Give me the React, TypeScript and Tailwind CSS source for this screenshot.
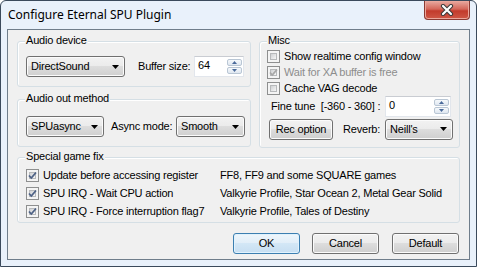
import React from 'react';

const btnFace =
  'bg-[linear-gradient(to_bottom,#f2f2f2,#ebebeb_49%,#dddddd_50%,#cfcfcf)] shadow-[inset_0_0_0_1px_#fbfbfb]';

function Arrow() {
  return (
    <svg width="7" height="4" viewBox="0 0 7 4">
      <path d="M0 0H7L3.5 4Z" fill="#000" />
    </svg>
  );
}

function Combo({ label, className }: { label: string; className: string }) {
  return (
    <div
      className={`flex h-[21px] items-center justify-between rounded-[3px] border border-[#707070] pl-[4px] pr-[5px] ${btnFace} ${className}`}
    >
      <span>{label}</span>
      <Arrow />
    </div>
  );
}

function SpinBtn({ up }: { up?: boolean }) {
  return (
    <div className="flex flex-1 items-center justify-center rounded-[2px] border border-[#b9c6d4] bg-[linear-gradient(to_bottom,#f6f9fc,#dfe7f0)]">
      <svg width="5" height="3" viewBox="0 0 5 3">
        <path d={up ? 'M0 3H5L2.5 0Z' : 'M0 0H5L2.5 3Z'} fill="#4a6a9a" />
      </svg>
    </div>
  );
}

function SpinEdit({ value, className }: { value: string; className: string }) {
  return (
    <div
      className={`flex h-[21px] items-stretch border border-[#e2e6ec] border-t-[#c9ccd2] bg-white ${className}`}
    >
      <span className="flex-1 pl-[3px] leading-[17px]">{value}</span>
      <div className="flex w-[16px] flex-col gap-[1px] py-[2px] pr-[1px]">
        <SpinBtn up />
        <SpinBtn />
      </div>
    </div>
  );
}

function Check({ checked, disabled }: { checked?: boolean; disabled?: boolean }) {
  return (
    <div className="relative h-[13px] w-[13px] shrink-0 border border-[#8e8f8f] bg-[#f4f4f4] p-[2px]">
      <div className="h-full w-full border border-[#b7b9bb] bg-[linear-gradient(135deg,#cfd1d3,#f6f6f6)]" />
      {checked && (
        <svg className="absolute left-0 top-0" width="11" height="11" viewBox="0 0 11 11">
          <path
            d="M2 5.5L4.3 8L9 2.5"
            fill="none"
            stroke={disabled ? '#a7a7a7' : '#4d6185'}
            strokeWidth="1.8"
          />
        </svg>
      )}
    </div>
  );
}

function Group({ title, className, children }: { title: string; className: string; children?: React.ReactNode }) {
  return (
    <div
      className={`relative rounded-[3px] border border-[#d5dfe5] shadow-[inset_1px_1px_0_#fff] ${className}`}
    >
      <span className="absolute -top-[8px] left-[7px] bg-[#f0f0f0] px-[1px] leading-[13px]">{title}</span>
      {children}
    </div>
  );
}

function Button({ label, isDefault, className }: { label: string; isDefault?: boolean; className: string }) {
  return (
    <div
      className={`flex h-[21px] items-center justify-center rounded-[3px] border ${
        isDefault
          ? 'border-[#3c7fb1] bg-[linear-gradient(to_bottom,#eef6fc,#e1eef8_49%,#d3e7f6_50%,#c6def2)] shadow-[inset_0_0_0_1px_#e0f2fd]'
          : `border-[#707070] ${btnFace}`
      } ${className}`}
    >
      {label}
    </div>
  );
}

const fixes = [
  ['Update before accessing register', 'FF8, FF9 and some SQUARE games'],
  ['SPU IRQ - Wait CPU action', 'Valkyrie Profile, Star Ocean 2, Metal Gear Solid'],
  ['SPU IRQ - Force interruption flag7', 'Valkyrie Profile, Tales of Destiny'],
];

export default function App() {
  return (
    <div className="flex h-[267px] w-[477px] flex-col rounded-t-[6px] border border-[#3b4a5c] bg-[#e9f1fb]">
      {/* title bar */}
      <div className="flex h-[28px] items-start justify-between">
        <span className="ml-[7px] mt-[5px] font-['Noto_Sans',sans-serif] text-[12px] leading-[18px] text-black">
          Configure Eternal SPU Plugin
        </span>
        <div className="mr-[6px] flex h-[19px] w-[46px] items-center justify-center rounded-b-[4px] border border-t-0 border-[#8a3a33] bg-[linear-gradient(to_bottom,#e8aaa1,#d4675a_45%,#c23b2c_55%,#cf5746)] shadow-[inset_0_0_0_1px_#eba79c]">
          <svg width="14" height="12" viewBox="0 0 14 12">
            <path d="M3 2L11 10M11 2L3 10" stroke="#3a3a3a" strokeWidth="4.2" strokeLinecap="round" />
            <path d="M3 2L11 10M11 2L3 10" stroke="#fff" strokeWidth="2.2" strokeLinecap="round" />
          </svg>
        </div>
      </div>

      {/* client area */}
      <div className="mx-[6px] flex h-[231px] flex-col border border-[#6f7d8b] bg-[#f0f0f0] font-['Liberation_Sans',Arial,sans-serif] text-[11px] tracking-[-0.2px] text-black">
        <div className="ml-[9px] mt-[11px] flex gap-[8px]">
          <div className="flex w-[234px] flex-col">
            <Group title="Audio device" className="h-[46px]">
              <div className="ml-[8px] mt-[14px] flex items-center">
                <Combo label="DirectSound" className="w-[99px]" />
                <span className="ml-[13px] w-[56px]">Buffer size:</span>
                <SpinEdit value="64" className="w-[50px]" />
              </div>
            </Group>
            <Group title="Audio out method" className="mt-[12px] h-[48px]">
              <div className="ml-[8px] mt-[16px] flex items-center">
                <Combo label="SPUasync" className="w-[78px]" />
                <span className="ml-[7px] w-[65px]">Async mode:</span>
                <Combo label="Smooth" className="w-[69px]" />
              </div>
            </Group>
          </div>

          <Group title="Misc" className="h-[107px] w-[201px]">
            <div className="ml-[7px] mt-[6px] flex flex-col">
              <div className="flex h-[16px] items-center gap-[4px]">
                <Check />
                <span>Show realtime config window</span>
              </div>
              <div className="flex h-[16px] items-center gap-[4px]">
                <Check checked disabled />
                <span className="text-[#8d8d8d]">Wait for XA buffer is free</span>
              </div>
              <div className="flex h-[16px] items-center gap-[4px]">
                <Check />
                <span>Cache VAG decode</span>
              </div>
            </div>
            <div className="flex h-[20px] items-center">
              <span className="ml-[11px] w-[114px] whitespace-pre">Fine tune  [-360 - 360] :</span>
              <SpinEdit value="0" className="h-[20px] w-[66px]" />
            </div>
            <div className="mt-[2px] flex h-[22px] items-center">
              <Button label="Rec option" className="ml-[9px] h-[20px] w-[64px]" />
              <span className="ml-[10px] w-[42px]">Reverb:</span>
              <Combo label="Neill's" className="w-[68px]" />
            </div>
          </Group>
        </div>

        <Group title="Special game fix" className="ml-[9px] mt-[9px] h-[66px] w-[443px]">
          <div className="ml-[8px] mt-[8px] flex flex-col">
            {fixes.map(([a, b]) => (
              <div key={a} className="flex h-[18px] items-center">
                <Check checked />
                <span className="ml-[4px] w-[177px]">{a}</span>
                <span>{b}</span>
              </div>
            ))}
          </div>
        </Group>

        <div className="mt-[10px] flex justify-end pr-[10px]">
          <Button label="OK" isDefault className="w-[67px]" />
          <Button label="Cancel" className="ml-[12px] w-[67px]" />
          <Button label="Default" className="ml-[13px] w-[67px]" />
        </div>
      </div>
    </div>
  );
}
